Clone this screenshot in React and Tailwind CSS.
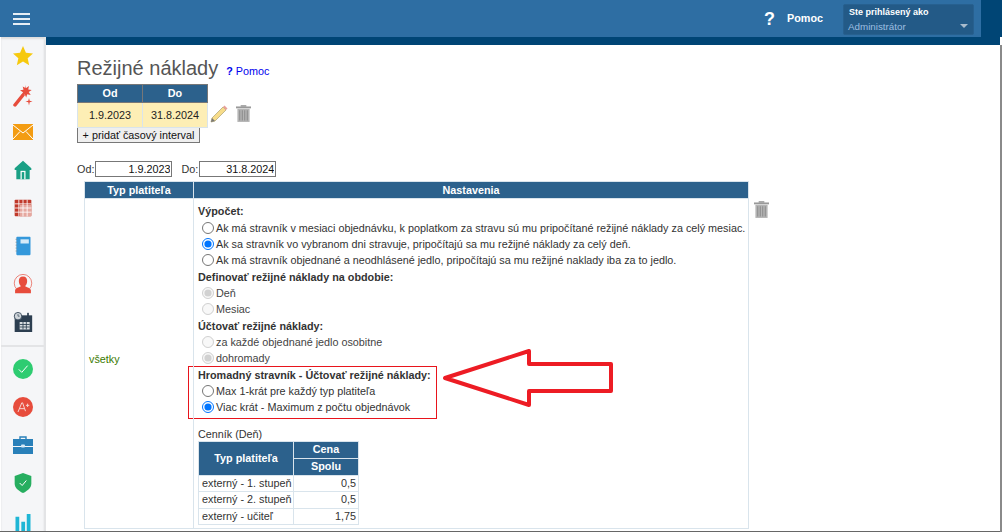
import React from "react";

const Radio = ({ checked, disabled, label, name }) => (
  <label className={`flex items-center h-[16.33px] pl-[4px] ${disabled ? "text-[#444]" : "text-[#333]"}`}>
    <input type="radio" name={name} defaultChecked={checked} disabled={disabled} className="w-[12px] h-[12px] m-0 mr-[2px] shrink-0 [appearance:auto]" />
    <span className="whitespace-nowrap">{label}</span>
  </label>
);

const Trash = ({ className }) => (
  <svg viewBox="0 0 16 18" className={className}>
    <rect x="0" y="1.5" width="16" height="2" fill="#999" />
    <rect x="5" y="0" width="6" height="2" fill="#a5a5a5" />
    <path d="M1.5 4h13v14h-13z" fill="#b4b4b4" />
    <path d="M4 5.500v11M6.700 5.500v11M9.300 5.500v11M12 5.500v11" stroke="#888" strokeWidth="1" />
  </svg>
);

const Icon = ({ children }) => (
  <div className="h-[38px] shrink-0 flex items-center justify-center">
    <svg viewBox="0 0 24 24" className="w-[20px] h-[20px] overflow-visible">{children}</svg>
  </div>
);

const Sidebar = () => (
  <aside className="w-[45px] ml-[1px] shrink-0 bg-[#f5f6f8] border-r-2 border-[#e3e4e6] flex flex-col overflow-hidden shadow-[inset_0_2px_2px_#ddd]">
    <Icon><path d="M12 0l3.500 8 8.500.9-6.400 5.700L19.400 23 12 18.700 4.600 23l1.800-8.400L0 8.900 8.500 8z" fill="#f6c90e" /></Icon>
    <div className="h-[38px] shrink-0 flex items-center justify-center">
      <svg viewBox="0 0 20 24" className="w-[20px] h-[24px] mt-[1px]">
        <path d="M2 22L10 12" stroke="#e74c3c" strokeWidth="3.500" strokeLinecap="round" />
        <path d="M12 2l1.200 3 2.800-2-.8 3.500 3.500.5-3 2 2 3-3.500-.8-1 3.300-1.500-3.200-3.200 1 1.500-3-3-2 3.500-.5-.8-3.300 2.800 1.500z" fill="#e74c3c" />
        <path d="M16 15l.7 2.800 2.800.7-2.800.7-.7 3.300-.7-3.300-2.800-.7 2.800-.7z" fill="#e74c3c" />
      </svg>
    </div>
    <div className="h-[38px] shrink-0 flex items-center justify-center">
      <svg viewBox="0 0 20 16" className="w-[20px] h-[16px]">
        <rect width="20" height="16" fill="#f39c12" />
        <path d="M0 1l10 8 10-8M0 15l7-7.500M20 15l-7-7.500" stroke="#fff" strokeWidth="1" fill="none" />
      </svg>
    </div>
    <Icon>
      <path d="M12 1L2 10v2h2v11h16V12h2v-2z" fill="#1aa085" />
      <rect x="9" y="13" width="6" height="10" fill="#fff" />
      <rect x="10.500" y="14.500" width="3" height="8.500" fill="#1aa085" />
    </Icon>
    <Icon>
      <rect x="2" y="2" width="20" height="20" rx="1" fill="#c0392b" />
      <path d="M2 7h20M2 12h20M2 17h20M7 2v20M12 2v20M17 2v20" stroke="#fff" strokeWidth="1" />
      <rect x="8" y="8" width="14" height="14" fill="#e6a8a0" />
      <path d="M8 12h14M8 17h14M12 8v14M17 8v14" stroke="#fff" strokeWidth="1" />
    </Icon>
    <Icon>
      <rect x="4" y="1" width="17" height="22" rx="1" fill="#3498db" />
      <path d="M3 4h2M3 7.500h2M3 11h2M3 14.500h2M3 18h2" stroke="#7f8c8d" strokeWidth="0.800" />
      <rect x="9" y="4" width="10" height="5" fill="#d6eaf8" />
    </Icon>
    <Icon>
      <circle cx="12" cy="11" r="10.500" fill="none" stroke="#e74c3c" strokeWidth="0.800" />
      <path d="M12 3c3.500 0 5 2.500 5 5.500 0 2.500-1 5-2.500 6 1 1.500 6 2 7 5v3.500H2.500V19.500c1-3 6-3.500 7-5C8 13.500 7 11 7 8.500 7 5.500 8.500 3 12 3z" fill="#e74c3c" />
    </Icon>
    <Icon>
      <rect x="2" y="4" width="21" height="20" fill="#2c3e50" />
      <rect x="8" y="12" width="12" height="9" fill="#d9dee2" />
      <path d="M8 15h12M8 18h12M12 12v9M16 12v9" stroke="#2c3e50" strokeWidth="1" />
      <circle cx="6" cy="5" r="4.500" fill="#cfd5da" stroke="#2c3e50" strokeWidth="1" />
      <path d="M6 2.500V5h2" stroke="#2c3e50" strokeWidth="0.800" fill="none" />
      <rect x="17" y="1" width="2" height="4" fill="#2c3e50" />
    </Icon>
    <div className="h-[2px] shrink-0 bg-[#e3e4e6] mt-[4px] mb-[3px]" />
    <Icon>
      <circle cx="12" cy="12" r="12" fill="#2ecc71" />
      <path d="M7 12.500l3.500 3.500 7-8" stroke="#fff" strokeWidth="1.200" fill="none" />
    </Icon>
    <Icon>
      <circle cx="12" cy="12" r="12" fill="#e74c3c" />
      <path d="M6 18l4.500-11h1L15 17M8 14h6M15.500 10h4M17.500 8v4" stroke="#f6d4d0" strokeWidth="1.200" fill="none" />
    </Icon>
    <div className="h-[38px] shrink-0 flex items-center justify-center">
      <svg viewBox="0 0 20 18" className="w-[20px] h-[18px]">
        <path d="M7 3V1h6v2" stroke="#2980b9" strokeWidth="1.400" fill="none" />
        <rect y="3" width="20" height="7" fill="#2980b9" />
        <rect y="11" width="20" height="7" fill="#2980b9" />
        <rect x="8" y="8.500" width="4" height="3" rx="1" fill="#d6eaf8" />
      </svg>
    </div>
    <Icon>
      <path d="M12 0l10 3.500v9c0 5-4 8.500-10 11.500C6 21 2 17.500 2 12.500v-9z" fill="#27ae60" />
      <path d="M8 12l3 3 5-6" stroke="#fff" strokeWidth="1.200" fill="none" />
    </Icon>
    <Icon>
      <path d="M3 7h4.500v17H3zM10 13h4.500v11H10zM16.500 3.500H21V24h-4.500z" fill="#1fb6d5" />
    </Icon>
  </aside>
);

const th = "bg-[#2c618c] text-white font-bold text-center";
const bd = "border border-[#d9e4ec]";

export default function App() {
  return (
    <div className="relative w-[1002px] h-[532px] overflow-hidden bg-white text-[10.8px] leading-[16.33px] text-[#333] font-['Liberation_Sans',Arial,sans-serif]">
      <header className="flex h-[37px] bg-[#004575]">
        <div className="w-[981px] bg-[#2e6ea3] flex items-center">
          <button className="ml-[13px] w-[17px] flex flex-col gap-[3px]">
            <span className="h-[2px] bg-[#e6eef5]" />
            <span className="h-[2px] bg-[#e6eef5]" />
            <span className="h-[2px] bg-[#e6eef5]" />
          </button>
          <div className="ml-auto flex items-center text-white font-bold">
            <span className="text-[18px] mr-[12px] mt-[2px]">?</span>
            <span className="text-[10.8px] mr-[20px]">Pomoc</span>
            <div className="w-[131px] h-[31px] mr-[7px] mt-[1px] rounded-[2px] bg-[#235a87] border border-[#27608f] pl-[5px] relative">
              <div className="text-[9px] leading-[13px] mt-[1px]">Ste prihlásený ako</div>
              <div className="text-[9.8px] leading-[13px] mt-[1px] -ml-[1px] font-normal text-[#9dbfe0]">Administrátor</div>
              <span className="absolute right-[5px] top-[19px] w-0 h-0 border-x-[4px] border-x-transparent border-t-[4px] border-t-[#a9bccd]" />
            </div>
          </div>
        </div>
      </header>
      <div className="flex h-[495px]">
        <Sidebar />
        <div className="flex-1 min-w-0 flex flex-col">
          <div className="h-[8px] bg-[#004575] mr-[2px]" />
          <main className="pl-[31px] flex-1 border-r-2 border-[#8a8a8a] overflow-hidden">
            <div className="flex items-baseline mt-[10px] h-[30px]">
              <h1 className="text-[20px] leading-[26px] text-[#555]">Režijné náklady</h1>
              <a className="ml-[8px] text-[#0000ee]"><b>?</b> Pomoc</a>
            </div>
            <div className="flex items-center h-[42px]">
              <table className="border-collapse w-[131px] table-fixed">
                <thead>
                  <tr className="h-[17px]">
                    <th className={`${th} border border-[#777] py-0`}>Od</th>
                    <th className={`${th} border border-[#777] py-0`}>Do</th>
                  </tr>
                </thead>
                <tbody>
                  <tr className="h-[25px] bg-[#fdeeb5] text-center text-[#222]">
                    <td className={bd}>1.9.2023</td>
                    <td className={bd}>31.8.2024</td>
                  </tr>
                </tbody>
              </table>
              <svg viewBox="0 0 18 18" className="w-[18px] h-[18px] ml-[2px] mt-[15px]">
                <path d="M2 13L13 2l3 3L5 16l-4 1z" fill="#f7dc8a" stroke="#b5a97c" strokeWidth="0.800" />
                <path d="M13 2l1.500-1.500 3 3L16 5z" fill="#e8a09a" />
                <path d="M1 17l1-4 3 3z" fill="#777" />
              </svg>
              <Trash className="w-[15px] h-[17px] ml-[8px] mt-[15px]" />
            </div>
            <button className="block w-[123px] h-[16px] border border-[#777] bg-[#efefef] text-[10.8px] leading-[13px] text-[#111] text-center whitespace-nowrap">+ pridať časový interval</button>
            <div className="flex items-center h-[16px] mt-[18px]">
              <span>Od:</span>
              <input readOnly value="1.9.2023" className="w-[77px] h-[16px] border border-[#777] text-right pr-[1px] text-[#111] ml-[1px] outline-none" />
              <span className="ml-[9px]">Do:</span>
              <input readOnly value="31.8.2024" className="w-[77px] h-[16px] border border-[#777] text-right pr-[1px] text-[#111] ml-[1px] outline-none" />
            </div>
            <div className="flex items-start mt-[4px] ml-[7px]">
              <table className="border-collapse w-[665px] table-fixed">
                <colgroup>
                  <col className="w-[109px]" />
                  <col />
                </colgroup>
                <thead>
                  <tr className="h-[17px]">
                    <th className={`${th} ${bd} py-0`}>Typ platiteľa</th>
                    <th className={`${th} ${bd} py-0`}>Nastavenia</th>
                  </tr>
                </thead>
                <tbody>
                  <tr>
                    <td className={`${bd} pl-[4px] pb-[10px] text-[#3a7a00]`}>všetky</td>
                    <td className={`${bd} pl-[4px] pt-[4px] pb-[3px] align-top`}>
                      <div className="font-bold">Výpočet:</div>
                      <Radio name="a" label="Ak má stravník v mesiaci objednávku, k poplatkom za stravu sú mu pripočítané režijné náklady za celý mesiac." />
                      <Radio name="a" checked label="Ak sa stravník vo vybranom dni stravuje, pripočítajú sa mu režijné náklady za celý deň." />
                      <Radio name="a" label="Ak má stravník objednané a neodhlásené jedlo, pripočítajú sa mu režijné naklady iba za to jedlo." />
                      <div className="font-bold">Definovať režijné náklady na obdobie:</div>
                      <Radio name="b" disabled checked label="Deň" />
                      <Radio name="b" disabled label="Mesiac" />
                      <div className="font-bold">Účtovať režijné náklady:</div>
                      <Radio name="c" disabled label="za každé objednané jedlo osobitne" />
                      <Radio name="c" disabled checked label="dohromady" />
                      <div className="border border-[#e8141c] w-[249px] -ml-[10px] pl-[9px] pb-[2px] -mb-[1px] -mt-[1px]">
                        <div className="font-bold whitespace-nowrap">Hromadný stravník - Účtovať režijné náklady:</div>
                        <Radio name="d" label="Max 1-krát pre každý typ platiteľa" />
                        <Radio name="d" checked label="Viac krát - Maximum z počtu objednávok" />
                      </div>
                      <div className="mt-[10px] leading-[13px]">Cenník (Deň)</div>
                      <table className="border-collapse w-[161px] table-fixed leading-[15px]">
                        <colgroup>
                          <col className="w-[95px]" />
                          <col />
                        </colgroup>
                        <thead>
                          <tr className="h-[17px]">
                            <th rowSpan={2} className={`${th} ${bd}`}>Typ platiteľa</th>
                            <th className={`${th} ${bd} py-0`}>Cena</th>
                          </tr>
                          <tr className="h-[17px]">
                            <th className={`${th} ${bd} py-0`}>Spolu</th>
                          </tr>
                        </thead>
                        <tbody>
                          <tr className="h-[16.5px]"><td className={`${bd} pl-[3px] py-0 whitespace-nowrap`}>externý - 1. stupeň</td><td className={`${bd} text-right pr-[2px] py-0`}>0,5</td></tr>
                          <tr className="h-[16.5px]"><td className={`${bd} pl-[3px] py-0 whitespace-nowrap`}>externý - 2. stupeň</td><td className={`${bd} text-right pr-[2px] py-0`}>0,5</td></tr>
                          <tr className="h-[16.5px]"><td className={`${bd} pl-[3px] py-0 whitespace-nowrap`}>externý - učiteľ</td><td className={`${bd} text-right pr-[2px] py-0`}>1,75</td></tr>
                        </tbody>
                      </table>
                    </td>
                  </tr>
                </tbody>
              </table>
              <Trash className="w-[15px] h-[17px] ml-[5px] mt-[20px]" />
            </div>
          </main>
        </div>
      </div>
      <div className="absolute left-0 right-[2px] bottom-0 h-px bg-[#666]" />
      <svg viewBox="0 0 176 66" className="absolute left-[440px] top-[345px] w-[176px] h-[66px]">
        <path d="M5 33L89 6V19H171V46H89V60Z" fill="none" stroke="#ed1c24" strokeWidth="4" strokeLinejoin="round" />
      </svg>
    </div>
  );
}
